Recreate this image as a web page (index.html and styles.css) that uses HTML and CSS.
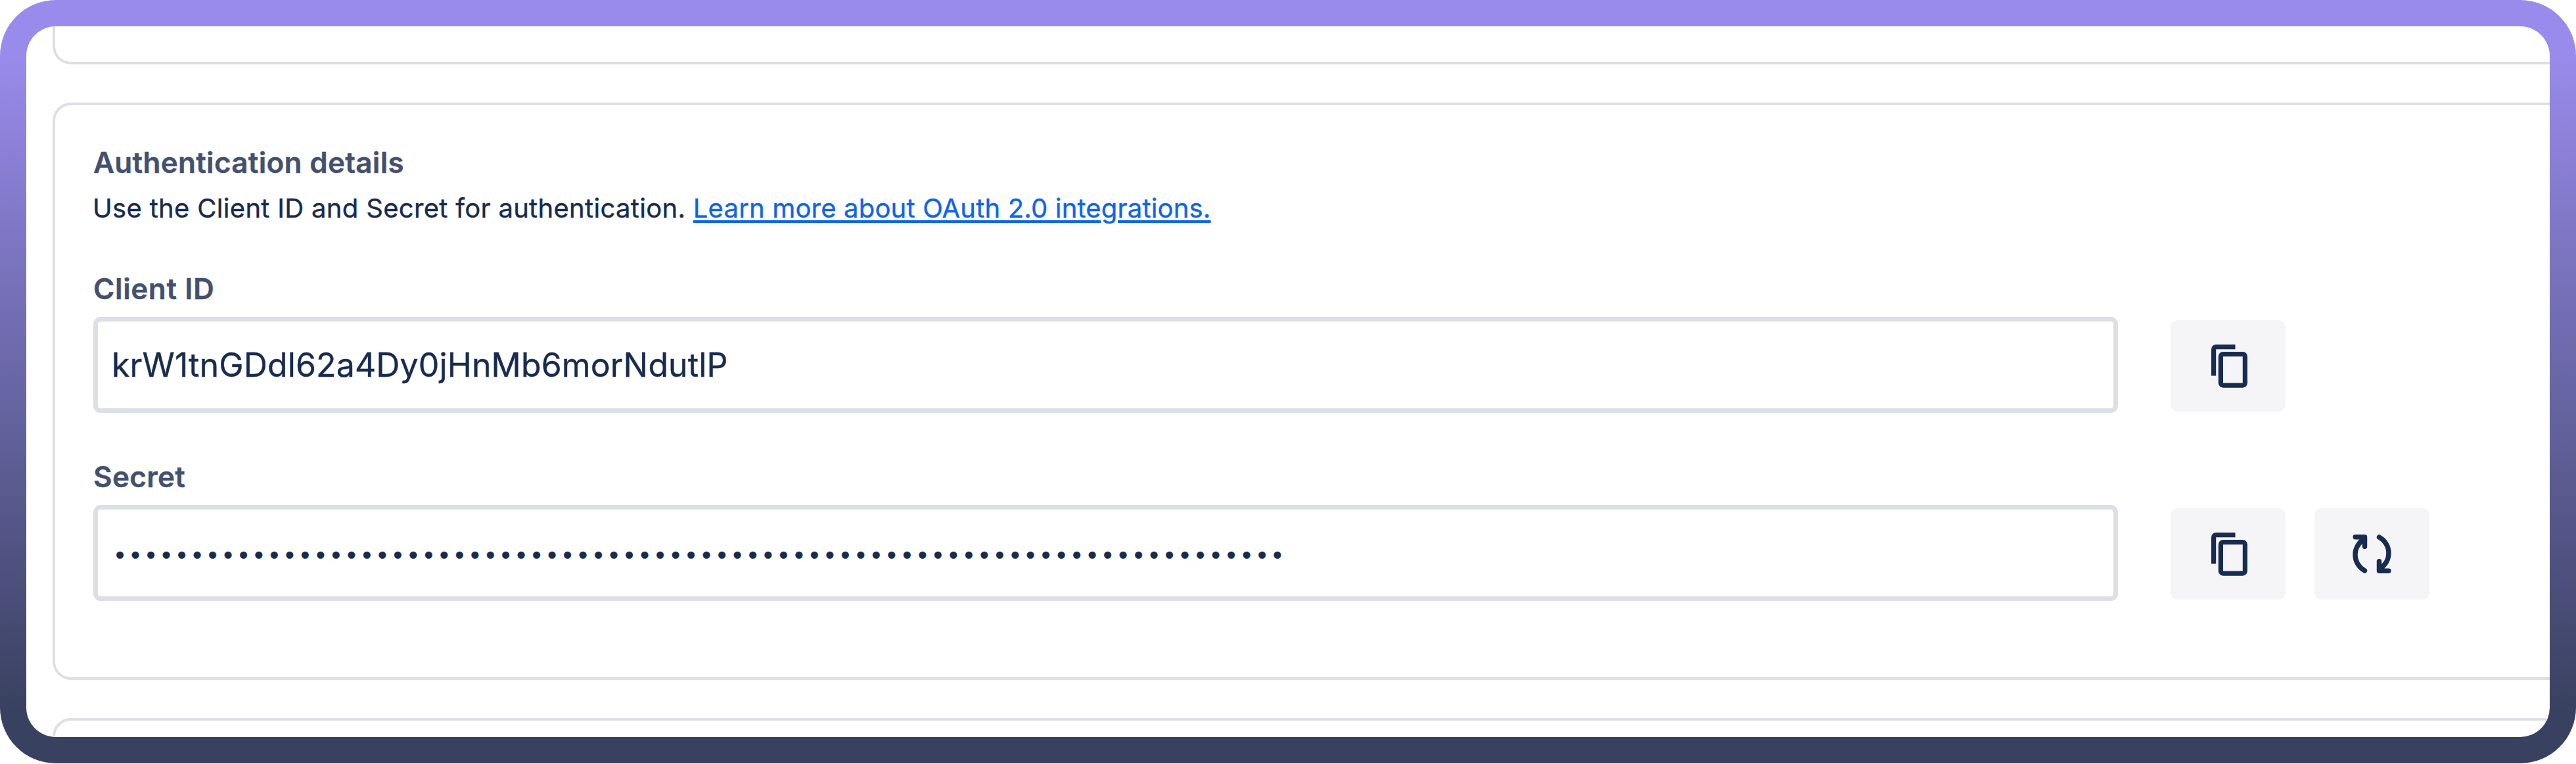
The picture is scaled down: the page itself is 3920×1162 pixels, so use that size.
FILE: index.html
```
<!DOCTYPE html>
<html lang="en">
<head>
    <meta charset="UTF-8">
    <meta name="viewport" content="width=device-width, initial-scale=1.0">
    <title>Authentication details</title>
    <link rel="stylesheet" href="styles.css">
</head>
<body>
    <div class="frame">
        <div class="page">
            <section class="card card-prev"></section>

            <section class="card card-auth">
                <h2 class="title">Authentication details</h2>
                <p class="description">Use the Client ID and Secret for authentication. <a class="link" href="#">Learn more about OAuth 2.0 integrations.</a></p>

                <div class="label">Client ID</div>
                <div class="row">
                    <div class="field">krW1tnGDdl62a4Dy0jHnMb6morNdutlP</div>
                    <button class="icon-button" type="button" aria-label="Copy">
                        <svg class="icon" viewBox="0 0 175 139">
                            <path d="M98.5 40.6H69.2a3.6 3.6 0 0 0-3.6 3.6V84.5"/>
                            <rect x="76.4" y="51.6" width="37" height="47.5" rx="3.6"/>
                        </svg>
                    </button>
                </div>

                <div class="label">Secret</div>
                <div class="row">
                    <div class="field secret">••••••••••••••••••••••••••••••••••••••••••••••••••••••••••••••••••••••••••••</div>
                    <button class="icon-button" type="button" aria-label="Copy">
                        <svg class="icon" viewBox="0 0 175 139">
                            <path d="M98.5 40.6H69.2a3.6 3.6 0 0 0-3.6 3.6V84.5"/>
                            <rect x="76.4" y="51.6" width="37" height="47.5" rx="3.6"/>
                        </svg>
                    </button>
                    <button class="icon-button" type="button" aria-label="Refresh">
                        <svg class="icon icon-round" viewBox="0 0 175 139">
                            <path d="M62.2 43.7H76.5V58.2M76.2 46.6A27.6 27.6 0 0 0 76.5 95"/>
                            <path d="M62.2 43.7H76.5V58.2M76.2 46.6A27.6 27.6 0 0 0 76.5 95" transform="rotate(180 87.5 69.5)"/>
                        </svg>
                    </button>
                </div>
            </section>

            <section class="card card-next"></section>
        </div>
    </div>
</body>
</html>
```
FILE: styles.css
```
* {
    box-sizing: border-box;
}

body {
    margin: 0;
    background-color: white;
    color: #182b50;
    font-family: Inter, "Liberation Sans", sans-serif;
    -webkit-text-stroke: 0.4px;
    overflow: hidden;
}

.frame {
    width: 3920px;
    height: 1161px;
    padding: 40px;
    border-radius: 85px;
    background: linear-gradient(to bottom, #998beb 80px, #394160 1080px);
}

.page {
    height: 1081px;
    padding-left: 40px;
    border-radius: 45px;
    background-color: white;
    overflow: hidden;
}

.card {
    width: 3900px;
    border: 4px solid #dddfe6;
    border-radius: 28px;
}

.card-prev {
    height: 58px;
    border-top: 0;
    border-top-left-radius: 0;
}

.card-auth {
    height: 878px;
    margin: 58px 0;
    padding: 60px 58px 0;
}

.card-next {
    height: 100px;
}

.title,
.label {
    font-size: 44px;
    font-weight: 600;
    line-height: 54px;
    letter-spacing: 0.3px;
    color: #445070;
}

.title {
    margin: 0;
}

.description {
    margin: 18px 0 0 -1px;
    font-size: 40px;
    line-height: 49px;
    letter-spacing: 0.31px;
}

.link {
    color: #0f65e8;
    letter-spacing: 0.18px;
    text-decoration-thickness: 4px;
    text-underline-offset: 4px;
}

.label {
    margin: 70px 0 16px;
}

.description + .label {
    margin-top: 71px;
    letter-spacing: 0.6px;
}

.row {
    display: flex;
    align-items: flex-end;
}

.field {
    display: flex;
    align-items: center;
    width: 3081px;
    height: 146px;
    margin-right: 80px;
    padding-left: 21px;
    border: 7px solid #dddfe6;
    border-radius: 11px;
    font-size: 50px;
    letter-spacing: 0.13px;
}

.secret {
    padding-left: 24px;
    font-size: 34px;
    letter-spacing: 4.36px;
}

.icon-button {
    width: 175px;
    height: 139px;
    margin: 0 44px 2px 0;
    padding: 0;
    border: 0;
    border-radius: 11px;
    background-color: #f5f5f8;
    cursor: pointer;
}

.icon {
    display: block;
    width: 175px;
    height: 139px;
    fill: none;
    stroke: #182b50;
    stroke-width: 7.2;
}

.icon-round {
    stroke-width: 7.5;
    stroke-linecap: round;
    stroke-linejoin: round;
}
```
